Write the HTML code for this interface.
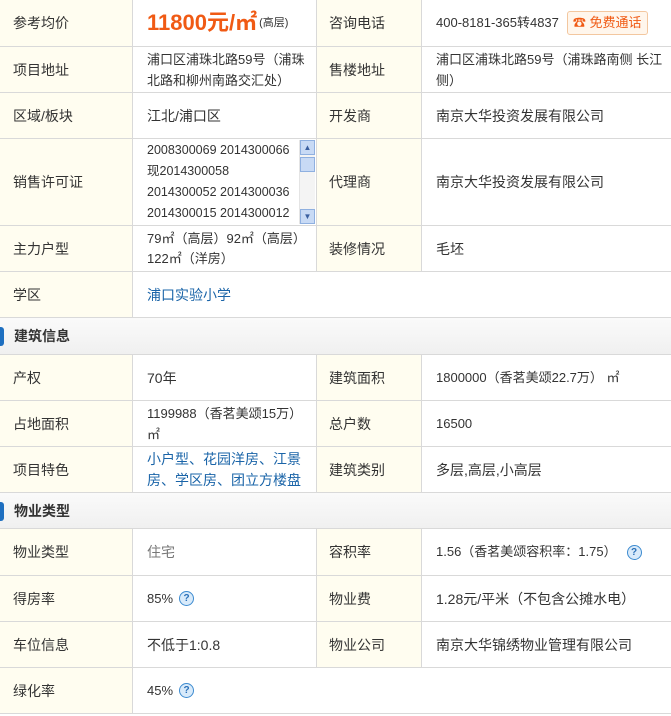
<!DOCTYPE html>
<html><head><meta charset="utf-8"><style>
body{margin:0;width:671px;height:716px;background:#fff;font-family:"Liberation Sans","Noto Sans CJK SC",sans-serif;font-size:14px;color:#333;position:relative;overflow:hidden}
.c{position:absolute;box-sizing:border-box;border-right:1px solid #d9d9d9;border-bottom:1px solid #d9d9d9;display:flex;align-items:center;line-height:22px}
.l{background:#fffdf0;padding-left:13px}
.v{padding-left:14px;padding-right:4px}
.h{position:absolute;left:0;width:671px;box-sizing:border-box;border-bottom:1px solid #d9d9d9;background:linear-gradient(#fafafa,#f0f0f0);font-weight:bold;font-size:14px;color:#333;display:flex;align-items:center;padding-left:14px}
.h:before{content:"";position:absolute;left:0;top:9px;width:4px;height:19px;background:#1e6fc0;border-radius:0 3px 3px 0}
a{color:#1a64a8;text-decoration:none}
.q{display:inline-block;width:13px;height:13px;border-radius:50%;border:1px solid #3d8bd0;background:#d8eafa;color:#2a70b8;font-size:10px;line-height:13px;text-align:center;font-weight:bold;margin-left:6px;vertical-align:middle}
.s{font-size:13px}
</style></head><body>
<div class="c l" style="left:0;top:0;width:133px;height:47px">参考均价</div>
<div class="c v" style="left:133px;top:0;width:184px;height:47px"><span style="color:#f05a14;font-size:22px;font-weight:bold">11800元/㎡</span><span style="font-size:11px;margin-left:2px">(高层)</span></div>
<div class="c l" style="left:317px;top:0;width:105px;height:47px;padding-left:12px">咨询电话</div>
<div class="c v s" style="left:422px;top:0;width:249px;height:47px;border-right:none">400-8181-365转4837<span style="display:inline-block;margin-left:8px;border:1px solid #f3c79f;border-radius:3px;background:#fff6ec;color:#f05a14;padding:0 5px;height:22px;line-height:22px">☎ 免费通话</span></div>
<div class="c l" style="left:0;top:47px;width:133px;height:46px">项目地址</div>
<div class="c v s" style="left:133px;top:47px;width:184px;height:46px;line-height:21px">浦口区浦珠北路59号（浦珠北路和柳州南路交汇处）</div>
<div class="c l" style="left:317px;top:47px;width:105px;height:46px;padding-left:12px">售楼地址</div>
<div class="c v s" style="left:422px;top:47px;width:249px;height:46px;border-right:none;line-height:21px;white-space:nowrap;overflow:hidden;display:block;padding-top:2px">浦口区浦珠北路59号（浦珠路南侧 长江<br>侧）</div>
<div class="c l" style="left:0;top:93px;width:133px;height:46px">区域/板块</div>
<div class="c v" style="left:133px;top:93px;width:184px;height:46px">江北/浦口区</div>
<div class="c l" style="left:317px;top:93px;width:105px;height:46px;padding-left:12px">开发商</div>
<div class="c v" style="left:422px;top:93px;width:249px;height:46px;border-right:none">南京大华投资发展有限公司</div>
<div class="c l" style="left:0;top:139px;width:133px;height:87px">销售许可证</div>
<div class="c v" style="left:133px;top:139px;width:184px;height:87px;display:block;padding-top:1px;line-height:21px;font-size:12.5px">2008300069 2014300066<br>现2014300058<br>2014300052 2014300036<br>2014300015 2014300012
<div style="position:absolute;right:1px;top:1px;width:15px;height:84px;background:#f4f4f4;border-left:1px solid #e4e4e4">
<div style="height:15px;background:#c8daf5;border:1px solid #8fb0e0;box-sizing:border-box;font-size:8px;line-height:13px;text-align:center;color:#3a5fa0">▲</div>
<div style="margin-top:2px;height:15px;background:#c8daf5;border:1px solid #8fb0e0;box-sizing:border-box"></div>
<div style="position:absolute;bottom:0;width:15px;height:15px;background:#c8daf5;border:1px solid #8fb0e0;box-sizing:border-box;font-size:8px;line-height:13px;text-align:center;color:#3a5fa0">▼</div></div></div>
<div class="c l" style="left:317px;top:139px;width:105px;height:87px;padding-left:12px">代理商</div>
<div class="c v" style="left:422px;top:139px;width:249px;height:87px;border-right:none">南京大华投资发展有限公司</div>
<div class="c l" style="left:0;top:226px;width:133px;height:46px">主力户型</div>
<div class="c v s" style="left:133px;top:226px;width:184px;height:46px;line-height:20px">79㎡（高层）92㎡（高层）122㎡（洋房）</div>
<div class="c l" style="left:317px;top:226px;width:105px;height:46px;padding-left:12px">装修情况</div>
<div class="c v" style="left:422px;top:226px;width:249px;height:46px;border-right:none">毛坯</div>
<div class="c l" style="left:0;top:272px;width:133px;height:46px">学区</div>
<div class="c v" style="left:133px;top:272px;width:538px;height:46px;border-right:none"><a>浦口实验小学</a></div>
<div class="h" style="top:318px;height:37px">建筑信息</div>
<div class="c l" style="left:0;top:355px;width:133px;height:46px">产权</div>
<div class="c v" style="left:133px;top:355px;width:184px;height:46px">70年</div>
<div class="c l" style="left:317px;top:355px;width:105px;height:46px;padding-left:12px">建筑面积</div>
<div class="c v s" style="left:422px;top:355px;width:249px;height:46px;border-right:none">1800000（香茗美颂22.7万） ㎡</div>
<div class="c l" style="left:0;top:401px;width:133px;height:46px">占地面积</div>
<div class="c v s" style="left:133px;top:401px;width:184px;height:46px;line-height:21px">1199988（香茗美颂15万）㎡</div>
<div class="c l" style="left:317px;top:401px;width:105px;height:46px;padding-left:12px">总户数</div>
<div class="c v s" style="left:422px;top:401px;width:249px;height:46px;border-right:none">16500</div>
<div class="c l" style="left:0;top:447px;width:133px;height:46px">项目特色</div>
<div class="c v" style="left:133px;top:447px;width:184px;height:46px;line-height:21px"><a>小户型、花园洋房、江景房、学区房、团立方楼盘</a></div>
<div class="c l" style="left:317px;top:447px;width:105px;height:46px;padding-left:12px">建筑类别</div>
<div class="c v" style="left:422px;top:447px;width:249px;height:46px;border-right:none">多层,高层,小高层</div>
<div class="h" style="top:493px;height:36px">物业类型</div>
<div class="c l" style="left:0;top:529px;width:133px;height:47px">物业类型</div>
<div class="c v" style="left:133px;top:529px;width:184px;height:47px;color:#777">住宅</div>
<div class="c l" style="left:317px;top:529px;width:105px;height:47px;padding-left:12px">容积率</div>
<div class="c v s" style="left:422px;top:529px;width:249px;height:47px;border-right:none">1.56（香茗美颂容积率：1.75）<span class="q" style="margin-left:10px">?</span></div>
<div class="c l" style="left:0;top:576px;width:133px;height:46px">得房率</div>
<div class="c v s" style="left:133px;top:576px;width:184px;height:46px">85%<span class="q">?</span></div>
<div class="c l" style="left:317px;top:576px;width:105px;height:46px;padding-left:12px">物业费</div>
<div class="c v" style="left:422px;top:576px;width:249px;height:46px;border-right:none">1.28元/平米（不包含公摊水电）</div>
<div class="c l" style="left:0;top:622px;width:133px;height:46px">车位信息</div>
<div class="c v" style="left:133px;top:622px;width:184px;height:46px">不低于1:0.8</div>
<div class="c l" style="left:317px;top:622px;width:105px;height:46px;padding-left:12px">物业公司</div>
<div class="c v" style="left:422px;top:622px;width:249px;height:46px;border-right:none">南京大华锦绣物业管理有限公司</div>
<div class="c l" style="left:0;top:668px;width:133px;height:46px">绿化率</div>
<div class="c v s" style="left:133px;top:668px;width:538px;height:46px;border-right:none">45%<span class="q">?</span></div>
</body></html>
